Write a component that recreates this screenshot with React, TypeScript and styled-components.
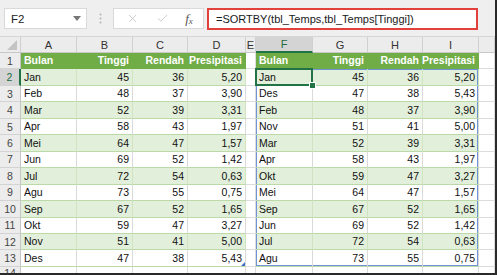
import styled, { createGlobalStyle, css } from "styled-components";
import { X, Check } from "lucide-react";

type Kind = "head" | "band" | "plain" | "blank";

const COLS = ["A", "B", "C", "D", "E", "F", "G", "H", "I", ""];
const WIDTHS = [56, 56, 55, 58, 10, 57, 55, 55, 56, 16];

const LEFT: (string | number)[][] = [
  ["Jan", 45, 36, "5,20"],
  ["Feb", 48, 37, "3,90"],
  ["Mar", 52, 39, "3,31"],
  ["Apr", 58, 43, "1,97"],
  ["Mei", 64, 47, "1,57"],
  ["Jun", 69, 52, "1,42"],
  ["Jul", 72, 54, "0,63"],
  ["Agu", 73, 55, "0,75"],
  ["Sep", 67, 52, "1,65"],
  ["Okt", 59, 47, "3,27"],
  ["Nov", 51, 41, "5,00"],
  ["Des", 47, 38, "5,43"],
];

const RIGHT: (string | number)[][] = [
  ["Jan", 45, 36, "5,20"],
  ["Des", 47, 38, "5,43"],
  ["Feb", 48, 37, "3,90"],
  ["Nov", 51, 41, "5,00"],
  ["Mar", 52, 39, "3,31"],
  ["Apr", 58, 43, "1,97"],
  ["Okt", 59, 47, "3,27"],
  ["Mei", 64, 47, "1,57"],
  ["Sep", 67, 52, "1,65"],
  ["Jun", 69, 52, "1,42"],
  ["Jul", 72, 54, "0,63"],
  ["Agu", 73, 55, "0,75"],
];

const HEADERS = ["Bulan", "Tinggi", "Rendah", "Presipitasi"];

const GlobalStyle = createGlobalStyle`
  html, body {
    margin: 0;
    padding: 0;
    background: #ffffff;
  }

  body {
    font-family: "Liberation Sans", Arial, sans-serif;
    overflow: hidden;
  }
`;

export default function App() {
  // builds the 4 table cells of one block (A-D or F-I) for a given sheet row
  function tableCells(row: number, data: (string | number)[][], spill: boolean, keyBase: string) {
    const kind: Kind = row === 1 ? "head" : row % 2 === 0 ? "band" : "plain";
    const values = row === 1 ? HEADERS : data[row - 2];

    return values.map((v, i) => {
      const shadows: string[] = [];
      if (spill && row >= 2) {
        if (i === 0) shadows.push("inset 1px 0 0 #6f93d6");
        if (i === 3) shadows.push("inset -1px 0 0 #6f93d6");
        if (row === 2) shadows.push("inset 0 1px 0 #6f93d6");
        if (row === 13) shadows.push("inset 0 -1px 0 #6f93d6");
      }
      return (
        <Cell
          key={keyBase + i}
          $kind={kind}
          $align={i === 0 ? "left" : "right"}
          $shadow={shadows.join(", ")}
          $selected={spill && row === 2 && i === 0}
          $handle={!spill && row === 13 && i === 3}
        >
          {v}
        </Cell>
      );
    });
  }

  const rows = [];
  for (let r = 1; r <= 13; r++) {
    rows.push(
      <RowHead key={"rh" + r} $active={r === 2}>
        {r}
      </RowHead>
    );
    rows.push(...tableCells(r, LEFT, false, `l${r}-`));
    rows.push(<Cell key={"e" + r} $kind="blank" $align="left" />);
    rows.push(...tableCells(r, RIGHT, true, `r${r}-`));
    rows.push(<Cell key={"j" + r} $kind="blank" $align="left" />);
  }

  return (
    <Frame>
      <GlobalStyle />
      <Toolbar>
        <NameBox>
          <span>F2</span>
          <svg width="8" height="5" viewBox="0 0 8 5">
            <path d="M0 0 L8 0 L4 5 Z" fill="#777" />
          </svg>
        </NameBox>
        <Grip>
          <svg width="3" height="11" viewBox="0 0 3 11">
            <circle cx="1.5" cy="1.5" r="1" fill="#b4b4b4" />
            <circle cx="1.5" cy="5.5" r="1" fill="#b4b4b4" />
            <circle cx="1.5" cy="9.5" r="1" fill="#b4b4b4" />
          </svg>
        </Grip>
        <ActionBox>
          <X size={13} strokeWidth={1.3} color="#b9b9b9" />
          <Check size={13} strokeWidth={1.3} color="#b9b9b9" />
          <Fx>
            f<sub>x</sub>
          </Fx>
        </ActionBox>
        <FormulaBox>=SORTBY(tbl_Temps,tbl_Temps[Tinggi])</FormulaBox>
      </Toolbar>
      <Sheet>
        <Corner />
        {COLS.map((c, i) => (
          <ColHead key={"ch" + i} $active={c === "F"}>
            {c}
          </ColHead>
        ))}
        {rows}
        <RowHead $active={false}>14</RowHead>
        {COLS.map((_, i) => (
          <Cell key={"b" + i} $kind="blank" $align="left" />
        ))}
      </Sheet>
    </Frame>
  );
}

const Frame = styled.div`
  display: flex;
  flex-direction: column;
  box-sizing: border-box;
  width: 497px;
  height: 275px;
  overflow: hidden;
  border-right: 2px solid #2a2a2a;
  border-bottom: 2px solid #2a2a2a;
  background: #ffffff;
`;

const Toolbar = styled.div`
  display: flex;
  align-items: flex-start;
  box-sizing: border-box;
  height: 37px;
  padding: 8px 0 0 4px;
  background: #efefef;
  border-bottom: 1px solid #d6d6d6;
`;

const NameBox = styled.div`
  display: flex;
  justify-content: space-between;
  align-items: center;
  box-sizing: border-box;
  width: 83px;
  height: 21px;
  padding: 0 5px 0 6px;
  background: #ffffff;
  border: 1px solid #d9d9d9;
  font-size: 11.5px;
  color: #222;
`;

const Grip = styled.div`
  display: flex;
  justify-content: center;
  width: 26px;
  padding-top: 5px;
`;

const ActionBox = styled.div`
  display: flex;
  align-items: center;
  justify-content: space-around;
  box-sizing: border-box;
  width: 91px;
  height: 21px;
  padding: 0 2px 0 4px;
  background: #ffffff;
  border: 1px solid #d9d9d9;
`;

const Fx = styled.span`
  font-family: "Liberation Serif", "Times New Roman", serif;
  font-style: italic;
  font-size: 13px;
  color: #555;

  sub {
    font-size: 9px;
    vertical-align: -1px;
  }
`;

const FormulaBox = styled.div`
  display: flex;
  align-items: center;
  box-sizing: border-box;
  width: 271px;
  height: 22px;
  margin-left: 3px;
  padding-left: 7px;
  background: #ffffff;
  border: 2px solid #e2403b;
  font-size: 11px;
  color: #1a1a1a;
  white-space: nowrap;
`;

const Sheet = styled.div`
  display: grid;
  grid-template-columns: 21px ${WIDTHS.map((w) => w + "px").join(" ")};
  grid-template-rows: 16px repeat(13, 16.46px) 1fr;
  flex: 1;
  min-height: 0;
`;

const Corner = styled.div`
  position: relative;
  background: #ececec;
  border-right: 1px solid #cfcfcf;
  border-bottom: 1px solid #c8c8c8;

  &::after {
    content: "";
    position: absolute;
    right: 3px;
    bottom: 2px;
    border-left: 10px solid transparent;
    border-bottom: 10px solid #c3c3c3;
  }
`;

const ColHead = styled.div<{ $active: boolean }>`
  display: flex;
  align-items: center;
  justify-content: center;
  box-sizing: border-box;
  background: ${({ $active }) => ($active ? "#d4d4d4" : "#ececec")};
  border-right: 1px solid #d0d0d0;
  border-bottom: ${({ $active }) => ($active ? "2px solid #217346" : "1px solid #c8c8c8")};
  font-size: 11px;
  color: ${({ $active }) => ($active ? "#1f6b3f" : "#333")};
`;

const RowHead = styled.div<{ $active: boolean }>`
  display: flex;
  align-items: center;
  justify-content: center;
  box-sizing: border-box;
  background: ${({ $active }) => ($active ? "#d4d4d4" : "#ececec")};
  border-right: ${({ $active }) => ($active ? "2px solid #217346" : "1px solid #c6c6c6")};
  border-bottom: 1px solid #d3d3d3;
  font-size: 10.5px;
  color: ${({ $active }) => ($active ? "#1f6b3f" : "#444")};
`;

const kindStyles = {
  head: css`
    background: #70ad47;
    color: #ffffff;
    font-weight: bold;
    border-right-color: #70ad47;
    border-bottom-color: #70ad47;
  `,
  band: css`
    background: #e2efda;
    color: #111;
    border-right-color: #d0e4c2;
    border-bottom-color: #bcd9a8;
  `,
  plain: css`
    background: #ffffff;
    color: #111;
    border-right-color: #dadada;
    border-bottom-color: #bcd9a8;
  `,
  blank: css`
    background: #ffffff;
    border-right-color: #dcdcdc;
    border-bottom-color: #dcdcdc;
  `,
};

const Cell = styled.div<{
  $kind: Kind;
  $align: "left" | "right";
  $shadow?: string;
  $selected?: boolean;
  $handle?: boolean;
}>`
  position: relative;
  display: flex;
  align-items: flex-end;
  justify-content: ${({ $align }) => ($align === "left" ? "flex-start" : "flex-end")};
  box-sizing: border-box;
  padding: 0 3px 2px;
  border-right: 1px solid;
  border-bottom: 1px solid;
  font-size: 10.5px;
  line-height: 12px;
  white-space: nowrap;
  box-shadow: ${({ $shadow }) => $shadow || "none"};
  ${({ $kind }) => kindStyles[$kind]};

  ${({ $selected }) =>
    $selected &&
    css`
      &::after {
        content: "";
        position: absolute;
        top: -1px;
        left: -1px;
        right: -1px;
        bottom: -1px;
        border: 2px solid #217346;
      }

      &::before {
        content: "";
        position: absolute;
        right: -4px;
        bottom: -4px;
        width: 5px;
        height: 5px;
        background: #217346;
        border: 1px solid #ffffff;
        z-index: 2;
      }
    `}

  ${({ $handle }) =>
    $handle &&
    css`
      &::after {
        content: "";
        position: absolute;
        right: 0;
        bottom: 0;
        border-left: 4px solid transparent;
        border-bottom: 4px solid #3f6fc4;
      }
    `}
`;
